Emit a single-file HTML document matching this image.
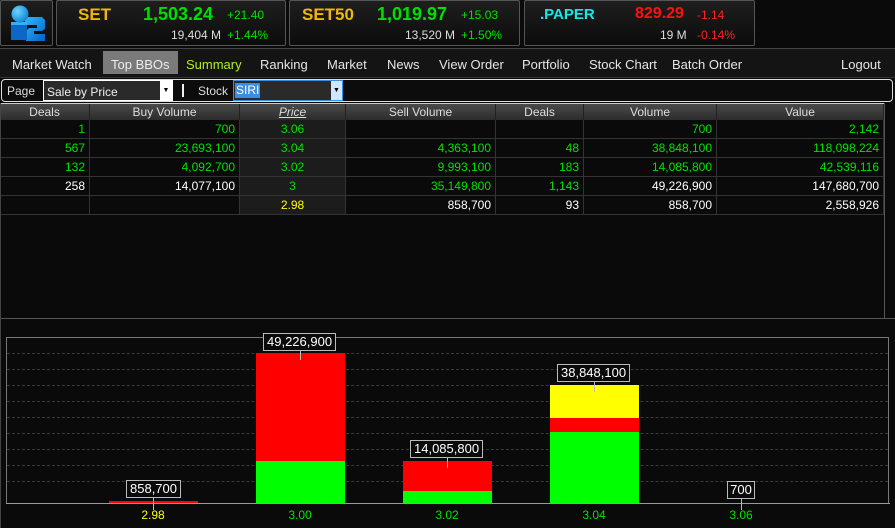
<!DOCTYPE html>
<html><head><meta charset="utf-8">
<style>
*{margin:0;padding:0;box-sizing:border-box}
body{width:895px;height:528px;background:#0a0a0a;font-family:"Liberation Sans",sans-serif;position:relative;overflow:hidden;color:#ddd}
.a{position:absolute}
.box{position:absolute;border:1px solid #555;background:linear-gradient(#1e1e1e,#0c0c0c);border-radius:2px}
.nav span{position:absolute;top:57px;font-size:13px;color:#e6e6e6}
.th{position:absolute;top:104px;height:16px;background:linear-gradient(#4a4a4a,#2c2c2c);border-right:1px solid #222;font-size:12px;color:#ddd;text-align:center;line-height:16px}
.c{position:absolute;height:19px;border-right:1px solid #333;border-bottom:1px solid #333;font-size:12px;line-height:18px;text-align:right;padding-right:4px;font-family:"Liberation Sans",sans-serif}
.g{color:#00e000}.w{color:#fff}.y{color:#ffff00}
.grid{position:absolute;left:7px;width:881px;border-top:1px dashed #3a3a3a}
.lbl{position:absolute;border:1px solid #bbb;background:#0a0a0a;color:#fff;font-size:13px;height:18px;line-height:16px;padding:0 3px;text-align:center}
.tick{position:absolute;width:1px;background:#bbb}
.xl{position:absolute;top:508px;font-size:12px;width:60px;text-align:center}
</style></head><body>
<!-- logo -->
<div class="box" style="left:0;top:0;width:53px;height:46px"></div>
<svg class="a" style="left:8px;top:4px" width="40" height="38" viewBox="0 0 40 38">
<defs>
<radialGradient id="s" cx="0.35" cy="0.35" r="0.7"><stop offset="0" stop-color="#6fd4ff"/><stop offset="1" stop-color="#0a86d8"/></radialGradient>
<linearGradient id="b" x1="0" y1="0" x2="1" y2="1"><stop offset="0" stop-color="#30b8ff"/><stop offset="1" stop-color="#0860c0"/></linearGradient>
</defs>
<path d="M17 13h17l3 3v9l-3 2h-8v3h11v7H18v-10l3-3h8v-3H17z" fill="url(#b)"/>
<rect x="3" y="18" width="16" height="18" fill="#0b68c8"/>
<rect x="3" y="18" width="16" height="3" fill="#3aaef0"/>
<circle cx="12" cy="10" r="8.5" fill="url(#s)"/>
</svg>
<!-- SET -->
<div class="box" style="left:56px;top:0;width:230px;height:46px"></div>
<div class="a" style="left:78px;top:5px;font-size:17px;font-weight:bold;color:#f0b800">SET</div>
<div class="a" style="left:143px;top:4px;font-size:18px;font-weight:bold;color:#00e000">1,503.24</div>
<div class="a" style="left:227px;top:8px;font-size:12px;color:#00e000">+21.40</div>
<div class="a" style="left:171px;top:28px;font-size:12px;color:#ddd">19,404 M</div>
<div class="a" style="left:227px;top:28px;font-size:12px;color:#00e000">+1.44%</div>
<!-- SET50 -->
<div class="box" style="left:289px;top:0;width:231px;height:46px"></div>
<div class="a" style="left:302px;top:5px;font-size:17px;font-weight:bold;color:#f0b800">SET50</div>
<div class="a" style="left:377px;top:4px;font-size:18px;font-weight:bold;color:#00e000">1,019.97</div>
<div class="a" style="left:461px;top:8px;font-size:12px;color:#00e000">+15.03</div>
<div class="a" style="left:405px;top:28px;font-size:12px;color:#ddd">13,520 M</div>
<div class="a" style="left:461px;top:28px;font-size:12px;color:#00e000">+1.50%</div>
<!-- PAPER -->
<div class="box" style="left:524px;top:0;width:231px;height:46px"></div>
<div class="a" style="left:540px;top:6px;font-size:15px;font-weight:bold;color:#18e8e8">.PAPER</div>
<div class="a" style="left:635px;top:5px;font-size:16px;font-weight:bold;color:#ff1010">829.29</div>
<div class="a" style="left:697px;top:8px;font-size:12px;color:#ff2020">-1.14</div>
<div class="a" style="left:660px;top:28px;font-size:12px;color:#ddd">19 M</div>
<div class="a" style="left:697px;top:28px;font-size:12px;color:#ff2020">-0.14%</div>
<!-- nav -->
<div class="a" style="left:0;top:48px;width:895px;height:30px;background:#141414;border-top:1px solid #444;border-bottom:1px solid #333"></div>
<div class="a" style="left:103px;top:51px;width:75px;height:23px;background:#7a7a7a"></div>
<div class="nav">
<span style="left:12px">Market Watch</span>
<span style="left:111px;color:#eee">Top BBOs</span>
<span style="left:186px;color:#b0f020">Summary</span>
<span style="left:260px">Ranking</span>
<span style="left:327px">Market</span>
<span style="left:387px">News</span>
<span style="left:439px">View Order</span>
<span style="left:522px">Portfolio</span>
<span style="left:589px">Stock Chart</span>
<span style="left:672px">Batch Order</span>
<span style="left:841px">Logout</span>
</div>
<!-- filter row -->
<div class="a" style="left:1px;top:79px;width:892px;height:23px;border:1px solid #ddd;border-radius:4px;background:#0c0c0c"></div>
<div class="a" style="left:7px;top:84px;font-size:12px;color:#ddd">Page</div>
<div class="a" style="left:43px;top:80px;width:130px;height:21px;border:1px solid #fff;background:#2a2a2a"></div>
<div class="a" style="left:47px;top:85px;font-size:12px;color:#eee">Sale by Price</div>
<div class="a" style="left:160px;top:81px;width:12px;height:19px;background:#fff;color:#000;font-size:7px;text-align:center;line-height:19px">▼</div>
<div class="a" style="left:182px;top:84px;width:2px;height:13px;background:#eee"></div>
<div class="a" style="left:198px;top:84px;font-size:12px;color:#ddd">Stock</div>
<div class="a" style="left:233px;top:80px;width:110px;height:21px;border:1px solid #3a8ee0;background:#2a2a2a"></div>
<div class="a" style="left:235px;top:83px;width:25px;height:15px;background:#3a8ee0;color:#fff;font-size:12px;line-height:15px;padding-left:1px">SIRI</div>
<div class="a" style="left:331px;top:81px;width:11px;height:19px;background:#cfe6ff;color:#000;font-size:7px;text-align:center;line-height:19px">▼</div>
<!-- table -->
<div class="a" style="left:0;top:103px;width:895px;height:216px;border-bottom:1px solid #555;background:#0a0a0a"></div>
<div class="a" style="left:0;top:103px;width:885px;height:1px;background:#ccc"></div>
<div class="a" style="left:884px;top:103px;width:1px;height:215px;background:#555"></div>
<div class="th" style="left:0;width:90px">Deals</div>
<div class="th" style="left:90px;width:150px">Buy Volume</div>
<div class="th" style="left:240px;width:106px;font-style:italic;text-decoration:underline">Price</div>
<div class="th" style="left:346px;width:150px">Sell Volume</div>
<div class="th" style="left:496px;width:88px">Deals</div>
<div class="th" style="left:584px;width:133px">Volume</div>
<div class="th" style="left:717px;width:167px">Value</div>
<div class="a" style="left:240px;top:120px;width:106px;height:95px;background:#1c1c1c"></div>
<div id="rows"></div>
<!-- chart -->
<div class="a" style="left:6px;top:337px;width:883px;height:167px;border:1px solid #777;border-bottom:none"></div>
<div class="grid" style="top:353px"></div><div class="grid" style="top:369px"></div><div class="grid" style="top:385px"></div><div class="grid" style="top:401px"></div><div class="grid" style="top:417px"></div><div class="grid" style="top:433px"></div><div class="grid" style="top:449px"></div><div class="grid" style="top:465px"></div><div class="grid" style="top:481px"></div>
<div class="a" style="left:109px;top:501px;width:89px;height:2px;background:#ff0000"></div>
<div class="a" style="left:256px;top:353px;width:89px;height:108px;background:#ff0000"></div>
<div class="a" style="left:256px;top:461px;width:89px;height:42px;background:#00ff00"></div>
<div class="a" style="left:403px;top:461px;width:89px;height:30px;background:#ff0000"></div>
<div class="a" style="left:403px;top:491px;width:89px;height:12px;background:#00ff00"></div>
<div class="a" style="left:550px;top:385px;width:89px;height:33px;background:#ffff00"></div>
<div class="a" style="left:550px;top:418px;width:89px;height:14px;background:#ff0000"></div>
<div class="a" style="left:550px;top:432px;width:89px;height:71px;background:#00ff00"></div>
<div class="a" style="left:6px;top:503px;width:884px;height:1px;background:#999"></div>
<div class="tick" style="left:153px;top:497px;height:13px"></div>
<div class="lbl" style="left:126px;top:480px">858,700</div>
<div class="tick" style="left:300px;top:350px;height:10px"></div>
<div class="lbl" style="left:263px;top:333px">49,226,900</div>
<div class="tick" style="left:447px;top:458px;height:10px"></div>
<div class="lbl" style="left:410px;top:440px">14,085,800</div>
<div class="tick" style="left:594px;top:382px;height:10px"></div>
<div class="lbl" style="left:557px;top:364px">38,848,100</div>
<div class="tick" style="left:741px;top:499px;height:11px"></div>
<div class="lbl" style="left:727px;top:481px;width:28px;padding:0">700</div>
<div class="xl y" style="left:123px">2.98</div>
<div class="xl g" style="left:270px">3.00</div>
<div class="xl g" style="left:417px">3.02</div>
<div class="xl g" style="left:564px">3.04</div>
<div class="xl g" style="left:711px">3.06</div>
<div class="a" style="left:0;top:103px;width:1px;height:425px;background:#444"></div>
<script>
var cols=[[0,90],[90,150],[240,106],[346,150],[496,88],[584,133],[717,167]];
var d=[
[["1","g"],["700","g"],["3.06","g"],["",""],["",""],["700","g"],["2,142","g"]],
[["567","g"],["23,693,100","g"],["3.04","g"],["4,363,100","g"],["48","g"],["38,848,100","g"],["118,098,224","g"]],
[["132","g"],["4,092,700","g"],["3.02","g"],["9,993,100","g"],["183","g"],["14,085,800","g"],["42,539,116","g"]],
[["258","w"],["14,077,100","w"],["3","g"],["35,149,800","g"],["1,143","g"],["49,226,900","w"],["147,680,700","w"]],
[["",""],["",""],["2.98","y"],["858,700","w"],["93","w"],["858,700","w"],["2,558,926","w"]]];
var h="";
for(var r=0;r<5;r++)for(var c=0;c<7;c++){
h+='<div class="c '+d[r][c][1]+'" style="left:'+cols[c][0]+'px;top:'+(120+r*19)+'px;width:'+cols[c][1]+'px;'+(c==2?'text-align:center;padding:0':'')+'">'+d[r][c][0]+'</div>';}
document.getElementById("rows").innerHTML=h;
</script>
</body></html>
